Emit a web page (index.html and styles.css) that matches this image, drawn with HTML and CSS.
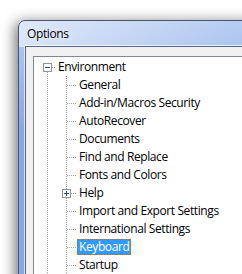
FILE: index.html
```html
<!DOCTYPE html>
<html lang="en">
<head>
  <meta charset="UTF-8">
  <title>Options</title>
  <link rel="stylesheet" href="styles.css">
</head>
<body>
  <div class="window">
    <div class="titlebar">Options</div>
    <div class="client">
      <div class="tree">
        <ul class="root">
          <li>
            <div class="row level0">
              <svg class="toggle" width="9" height="9" viewBox="0 0 9 9"><rect x="0.5" y="0.5" width="8" height="8" fill="#fff" stroke="#939393"/><path d="M2 4.5h5" stroke="#2b4a8e"/></svg>
              <span class="label">Environment</span>
            </div>
            <ul class="children">
              <li class="row level1"><span class="spacer"></span><span class="label">General</span></li>
              <li class="row level1"><span class="spacer"></span><span class="label">Add-in/Macros Security</span></li>
              <li class="row level1"><span class="spacer"></span><span class="label">AutoRecover</span></li>
              <li class="row level1"><span class="spacer"></span><span class="label">Documents</span></li>
              <li class="row level1"><span class="spacer"></span><span class="label">Find and Replace</span></li>
              <li class="row level1"><span class="spacer"></span><span class="label">Fonts and Colors</span></li>
              <li class="row level1">
                <svg class="toggle" width="9" height="9" viewBox="0 0 9 9"><rect x="0.5" y="0.5" width="8" height="8" fill="#fff" stroke="#939393"/><path d="M2 4.5h5M4.5 2v5" stroke="#2b4a8e"/></svg>
                <span class="label">Help</span>
              </li>
              <li class="row level1"><span class="spacer"></span><span class="label">Import and Export Settings</span></li>
              <li class="row level1"><span class="spacer"></span><span class="label">International Settings</span></li>
              <li class="row level1"><span class="spacer"></span><span class="label selected">Keyboard</span></li>
              <li class="row level1"><span class="spacer"></span><span class="label">Startup</span></li>
            </ul>
          </li>
        </ul>
      </div>
    </div>
  </div>
</body>
</html>
```

FILE: styles.css
```css
body {
  margin: 0;
  background: #fff;
  overflow: hidden;
  height: 274px;
  font-family: "Open Sans", "Noto Sans", sans-serif;
  font-size: 12px;
  letter-spacing: -0.4px;
  color: #000;
}
.window {
  margin: 20px 0 0 18px;
  width: 280px;
  height: 320px;
  border: 1px solid #4a5670;
  border-radius: 7px 7px 0 0;
  padding: 0 6px;
  background:
    linear-gradient(to right, rgba(255,255,255,0.55), rgba(255,255,255,0) 75%) top / 100% 26px no-repeat,
    linear-gradient(to bottom, #b7cdf2, #86a7e8 110px);
  box-shadow: -3px 2px 14px rgba(0,0,0,0.55);
}
.titlebar {
  height: 25px;
  line-height: 25px;
  padding-left: 2px;
  text-shadow: 0 0 6px #fff;
}
.client {
  border: 1px solid #56678a;
  background: #f0f0f0;
  padding: 9px 7px 0;
  box-shadow: 0 0 0 1px rgba(255,255,255,0.7);
  height: 400px;
}
.tree {
  border: 1px solid #828790;
  background: #fff;
  padding-top: 1px;
  height: 400px;
  overflow: hidden;
}
ul {
  list-style: none;
  margin: 0;
  padding: 0;
}
.root {
  position: relative;
}
.root::before {
  content: "";
  position: absolute;
  left: 13px;
  top: 14px;
  bottom: 0;
  width: 1px;
  background: repeating-linear-gradient(to bottom, #a0a0a0 0 1px, transparent 1px 2px);
}
.children {
  position: relative;
}
.children::before {
  content: "";
  position: absolute;
  left: 32px;
  top: 0;
  bottom: 0;
  width: 1px;
  background: repeating-linear-gradient(to bottom, #a0a0a0 0 1px, transparent 1px 2px);
}
.row {
  display: flex;
  height: 18px;
  position: relative;
}
.row::before {
  content: "";
  position: absolute;
  top: 9px;
  height: 1px;
  background: repeating-linear-gradient(to right, #a0a0a0 0 1px, transparent 1px 2px);
}
.level0 {
  padding-left: 9px;
}
.level0::before {
  left: 18px;
  width: 4px;
}
.level1 {
  padding-left: 28px;
}
.level1::before {
  left: 33px;
  width: 10px;
}
.toggle, .spacer {
  flex: none;
  width: 9px;
  height: 9px;
  margin-top: 5px;
  position: relative;
  z-index: 1;
}
.spacer {
  display: block;
}
.level0 .label {
  margin-left: 4px;
}
.level1 .label {
  margin-left: 6px;
}
.label {
  margin-top: 1px;
  height: 16px;
  line-height: 16px;
  padding: 0 2px;
  white-space: nowrap;
  box-sizing: border-box;
}
.selected {
  background: #3399ff;
  color: #fff;
  border: 1px dotted #c86a10;
  line-height: 14px;
  padding: 0 1px;
}
```
